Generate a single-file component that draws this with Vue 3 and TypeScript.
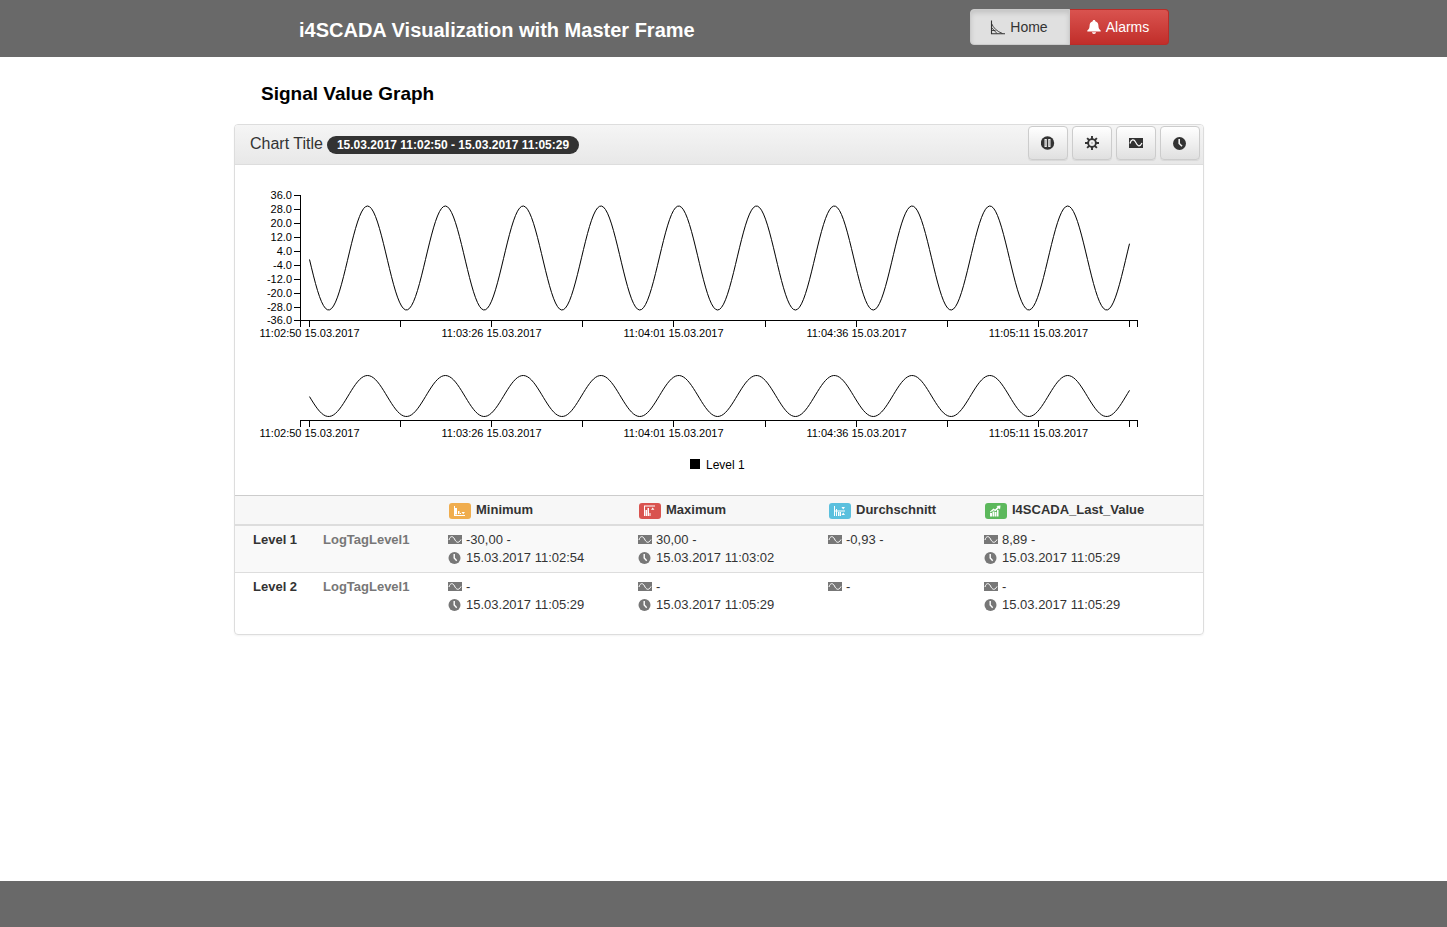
<script setup lang="ts">
interface Reading {
  value: string
  time?: string
}

interface Row {
  name: string
  tag: string
  readings: Reading[]
}

const stats = [
  { key: 'min', label: 'Minimum' },
  { key: 'max', label: 'Maximum' },
  { key: 'avg', label: 'Durchschnitt' },
  { key: 'last', label: 'I4SCADA_Last_Value' },
]

const rows: Row[] = [
  {
    name: 'Level 1',
    tag: 'LogTagLevel1',
    readings: [
      { value: '-30,00 -', time: '15.03.2017 11:02:54' },
      { value: '30,00 -', time: '15.03.2017 11:03:02' },
      { value: '-0,93 -' },
      { value: '8,89 -', time: '15.03.2017 11:05:29' },
    ],
  },
  {
    name: 'Level 2',
    tag: 'LogTagLevel1',
    readings: [
      { value: '-', time: '15.03.2017 11:05:29' },
      { value: '-', time: '15.03.2017 11:05:29' },
      { value: '-' },
      { value: '-', time: '15.03.2017 11:05:29' },
    ],
  },
]

const yTicks = Array.from({ length: 10 }, (_, i) => ({
  y: Math.min(15 + i * 14, 140) + 0.5,
  label: (36 - i * 8).toFixed(1),
}))

const xTimes = ['11:02:50', '11:03:26', '11:04:01', '11:04:36', '11:05:11']
const xTicks = Array.from({ length: 10 }, (_, i) => Math.round(59 + (i * 820) / 9) + 0.5)
const xLabels = xTimes.map((time, i) => ({ x: xTicks[i * 2], text: `${time} 15.03.2017` }))

/* Periodic signal; the first crest lies at x = 117.5. */
function wave(middle: number, amplitude: number): string {
  const points: string[] = []
  for (let x = 59.5; x <= 879.5; x += 2) {
    const y = middle - amplitude * Math.cos((2 * Math.PI * (x - 117.5)) / 77.8)
    points.push(`${x},${y.toFixed(2)}`)
  }
  return points.join(' ')
}

const charts = [
  { axis: 140.5, points: wave(78, 52) },
  { axis: 240.5, points: wave(216, 20.5) },
]
</script>

<template>
  <div class="page">
    <header class="topbar">
      <div class="container topbar-inner">
        <h1>i4SCADA Visualization with Master Frame</h1>
        <nav class="nav-group">
          <button type="button" class="nav-btn home">
            <svg width="15" height="15" viewBox="0 0 15 15" fill="none" stroke="currentColor" aria-hidden="true">
              <path d="M1.5 0.5V14M1 13.8H15" stroke-width="1.1" />
              <path d="M1.5 3.5C3.500 8 7 11.500 12.500 13.500M1.500 7.500L7 13.500M1.500 10.500H5.500" stroke-width="0.9" />
            </svg>
            Home
          </button>
          <button type="button" class="nav-btn alarms">
            <svg width="14" height="14" viewBox="0 0 14 14" fill="currentColor" aria-hidden="true">
              <path d="M7 0C7.800 0 8.300.5 8.300 1.200C10.400 1.800 11.300 3.500 11.400 5.500C11.500 8.200 12 9.300 13.700 10.400V11.500H.3V10.400C2 9.300 2.500 8.200 2.600 5.500C2.700 3.500 3.600 1.800 5.700 1.200C5.700.5 6.200 0 7 0ZM5 12.300H9C8.900 13.400 8.100 14 7 14S5.100 13.400 5 12.300Z" />
            </svg>
            Alarms
          </button>
        </nav>
      </div>
    </header>

    <main class="content">
      <div class="container">
        <h2>Signal Value Graph</h2>

        <section class="panel">
          <div class="panel-head">
            <div class="panel-title">
              <span>Chart Title</span>
              <span class="range">15.03.2017 11:02:50 - 15.03.2017 11:05:29</span>
            </div>
            <div class="tools">
              <button type="button" aria-label="Pause">
                <svg width="14" height="14" viewBox="0 0 14 14" aria-hidden="true">
                  <circle cx="6.500" cy="7" r="6.700" fill="#333" />
                  <path d="M3.500 3H5.800V11H3.500ZM7.200 3H9.500V11H7.200Z" fill="#eee" />
                  <path d="M4.650 4V10M8.350 4V10" stroke="#888" stroke-width="0.500" />
                </svg>
              </button>
              <button type="button" aria-label="Settings">
                <svg width="14" height="14" viewBox="0 0 14 14" aria-hidden="true">
                  <path d="M7 0V3M7 11V14M0 7H3M11 7H14M2.100 2.100L4.200 4.200M9.800 9.800L11.900 11.900M11.900 2.100L9.800 4.200M4.200 9.800L2.100 11.900" stroke="#333" stroke-width="1.900" />
                  <circle cx="7" cy="7" r="3.900" fill="none" stroke="#333" stroke-width="1.900" />
                  <circle cx="7" cy="7" r="0.700" fill="#777" />
                </svg>
              </button>
              <button type="button" aria-label="Signals">
                <svg width="14" height="14" viewBox="0 0 14 14" aria-hidden="true">
                  <path d="M0 2H14V12H0Z" fill="#333" />
                  <path d="M1 7.500C2 3.500 4.800 2.500 6.500 6S10.500 12 13 7" fill="none" stroke="#fff" stroke-width="1.200" />
                </svg>
              </button>
              <button type="button" aria-label="Time range">
                <svg width="14" height="14" viewBox="0 0 14 14" aria-hidden="true">
                  <circle cx="6.500" cy="7.500" r="6.500" fill="#333" />
                  <path d="M6.200 3V7.500L9 10.300" fill="none" stroke="#f2f2f2" stroke-width="1.600" />
                </svg>
              </button>
            </div>
          </div>

          <div class="chart">
            <svg viewBox="0 0 938 300" role="img" aria-label="Level 1 signal over time">
              <g v-for="(chart, i) in charts" :key="i">
                <path class="axis" :d="`M50.5 ${chart.axis + 6}V${chart.axis}H887.5V${chart.axis + 6}`" />
                <path v-for="x in xTicks" :key="x" class="axis" :d="`M${x} ${chart.axis}v6`" />
                <text v-for="l in xLabels" :key="l.text" class="tick" :x="l.x" :y="chart.axis + 16.5" text-anchor="middle">{{ l.text }}</text>
                <polyline class="wave" :points="chart.points" />
              </g>
              <path class="axis" d="M50.5 15V141" />
              <g v-for="t in yTicks" :key="t.label">
                <path class="axis" :d="`M44 ${t.y}H50.5`" />
                <text class="tick" x="42" :y="t.y + 3.5" text-anchor="end">{{ t.label }}</text>
              </g>
              <rect x="440" y="279" width="10" height="10" />
              <text class="legend" x="456" y="289">Level 1</text>
            </svg>
          </div>

          <table>
            <colgroup>
              <col class="c-name" />
              <col class="c-tag" />
              <col class="c-wide" />
              <col class="c-wide" />
              <col class="c-avg" />
              <col />
            </colgroup>
            <thead>
              <tr>
                <th></th>
                <th></th>
                <th v-for="s in stats" :key="s.key" scope="col">
                  <span class="stat">
                    <span class="badge" :class="s.key">
                      <svg width="14" height="12" viewBox="0 0 14 12" fill="#fff" aria-hidden="true">
                        <path v-if="s.key === 'min'" d="M1 1H2V10H12V11H1ZM2 3H4V9.500H2ZM5 6H6.500V9H5ZM7 8H8V9H7ZM8.500 7H12L10.200 9.200Z" />
                        <path v-else-if="s.key === 'max'" d="M1 0.500H12V1.500H2V11H1ZM2.500 5H4V11H2.500ZM4.500 3H6V11H4.500ZM6.500 8H7.500V11H6.500ZM8 4.700L9.700 2.500L11.400 4.700Z" />
                        <path v-else-if="s.key === 'avg'" d="M1 1H2V11H1ZM3 4H4V11H3ZM2 5.500H12V6.500H2ZM5 7H6.500V11H5ZM7 7H8V11H7ZM8.500 2H12L10.200 4.500ZM8.500 10H12L10.200 7.500Z" />
                        <path v-else d="M1 8H3V11.500H1ZM3.500 6.500H5.500V11.500H3.500ZM6 7H7.500V11.500H6ZM8 5H9.500V11.500H8ZM1 6.500L4.500 3.500L6 4.500L8.500 2L7.500 1L11.500 0.500L11 4.500L9.800 3.200L6.300 6.300L4.800 5.200L1 7.500Z" />
                      </svg>
                    </span>
                    {{ s.label }}
                  </span>
                </th>
              </tr>
            </thead>
            <tbody>
              <tr v-for="row in rows" :key="row.name">
                <th scope="row">{{ row.name }}</th>
                <td class="tag">{{ row.tag }}</td>
                <td v-for="(r, i) in row.readings" :key="i">
                  <div class="reading">
                    <svg width="14" height="14" viewBox="0 0 14 14" aria-hidden="true">
                      <path d="M0 2H14V11H0Z" fill="#777" />
                      <path d="M1 7C2 3 4.800 2.500 6.500 6S10.500 11 13 6.500" fill="none" stroke="#fff" />
                    </svg>
                    {{ r.value }}
                  </div>
                  <div v-if="r.time" class="reading">
                    <svg width="14" height="14" viewBox="0 0 14 14" aria-hidden="true">
                      <circle cx="6.500" cy="7" r="6" fill="#777" />
                      <path d="M6.200 3V7L8.700 9.700" fill="none" stroke="#fff" stroke-width="1.400" />
                    </svg>
                    {{ r.time }}
                  </div>
                </td>
              </tr>
            </tbody>
          </table>
        </section>
      </div>
    </main>

    <footer class="bottombar"></footer>
  </div>
</template>

<style>
body {
  margin: 0;
  background: #fff;
}
</style>

<style scoped>
* {
  box-sizing: border-box;
}
.page {
  display: flex;
  flex-direction: column;
  min-height: 100vh;
  font-family: "Liberation Sans", Arial, sans-serif;
  font-size: 13px;
  line-height: 18px;
  color: #333;
}
.topbar,
.content {
  padding-right: 9px;
}
.topbar {
  background: #696969;
}
.container {
  width: 100%;
  max-width: 970px;
  margin: 0 auto;
}
.topbar-inner {
  display: flex;
  justify-content: space-between;
  align-items: flex-start;
  height: 57px;
  padding: 9px 35px 0 65px;
}
h1 {
  margin: 0;
  font-size: 20px;
  line-height: 42px;
  color: #fff;
}
.nav-group {
  display: flex;
}
.nav-btn {
  display: flex;
  align-items: center;
  justify-content: center;
  gap: 5px;
  height: 36px;
  width: 100px;
  padding: 0 2px 0 0;
  border: 1px solid #ccc;
  font-family: inherit;
  font-size: 14px;
}
.home {
  border-radius: 4px 0 0 4px;
  background: #e0e0e0;
  color: #333;
  box-shadow: inset 0 3px 5px rgba(0, 0, 0, 0.125);
}
.alarms {
  width: 99px;
  border-color: #b92c28;
  border-left: 0;
  border-radius: 0 4px 4px 0;
  background: linear-gradient(#d9534f, #c12e2a);
  color: #fff;
}
.content {
  flex: 1;
}
h2 {
  margin: 0;
  padding: 25px 0 18px 27px;
  font-size: 19px;
  line-height: 24px;
  color: #000;
}
.panel {
  border: 1px solid #ddd;
  border-radius: 4px;
  padding-bottom: 15px;
  box-shadow: 0 1px 2px rgba(0, 0, 0, 0.05);
}
.panel-head {
  display: flex;
  justify-content: space-between;
  height: 40px;
  padding: 1px 3px 0 15px;
  border-bottom: 1px solid #ddd;
  border-radius: 3px 3px 0 0;
  background: linear-gradient(#f5f5f5, #e8e8e8);
}
.panel-title {
  display: flex;
  align-items: center;
  gap: 4px;
  padding-bottom: 2px;
  font-size: 16px;
}
.range {
  margin-top: 2px;
  padding: 0 10px;
  border-radius: 9px;
  background: #333;
  color: #fff;
  font-size: 12px;
  font-weight: bold;
  line-height: 18px;
}
.tools {
  display: flex;
  gap: 4px;
}
.tools button {
  display: flex;
  align-items: center;
  justify-content: center;
  width: 40px;
  height: 34px;
  padding: 0;
  border: 1px solid #ccc;
  border-radius: 4px;
  background: linear-gradient(#fff, #e0e0e0);
  box-shadow: 0 1px 1px rgba(0, 0, 0, 0.075);
}
.chart {
  padding: 15px;
}
.chart svg {
  display: block;
  width: 100%;
}
.axis {
  fill: none;
  stroke: #000;
  shape-rendering: crispEdges;
}
.wave {
  fill: none;
  stroke: #000;
}
.tick {
  font-size: 11px;
  fill: #000;
}
.legend {
  font-size: 12px;
  fill: #000;
}
table {
  width: 100%;
  table-layout: fixed;
  border-collapse: separate;
  border-spacing: 0;
}
.c-name {
  width: 83px;
}
.c-tag {
  width: 125px;
}
.c-wide {
  width: 190px;
}
.c-avg {
  width: 156px;
}
th,
td {
  padding: 5px;
  text-align: left;
  vertical-align: top;
}
thead th {
  border-top: 1px solid #ccc;
  border-bottom: 2px solid #ddd;
  padding-left: 6px;
  background: #f7f7f7;
}
tbody th {
  padding-left: 18px;
}
tbody tr:first-child > * {
  border-bottom: 1px solid #ddd;
  background: #f9f9f9;
}
.tag {
  font-weight: bold;
  color: #777;
}
.stat,
.reading {
  display: flex;
  align-items: center;
}
.stat {
  gap: 5px;
}
.reading {
  gap: 4px;
}
.badge {
  display: flex;
  align-items: center;
  justify-content: center;
  width: 22px;
  height: 16px;
  margin-top: 2px;
  border-radius: 3px;
}
.badge.min {
  background: #f0ad4e;
}
.badge.max {
  background: #d9534f;
}
.badge.avg {
  background: #5bc0de;
}
.badge.last {
  background: #5cb85c;
}
.bottombar {
  height: 46px;
  background: #696969;
}
</style>
